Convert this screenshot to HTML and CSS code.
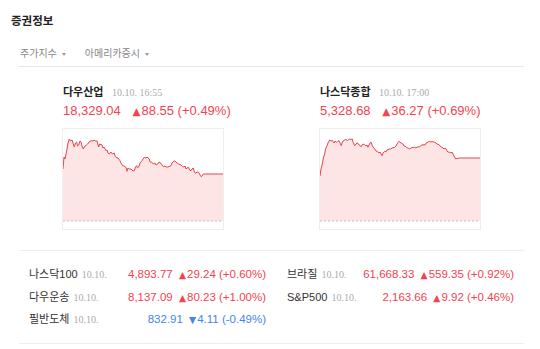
FILE: index.html
```html
<!DOCTYPE html>
<html lang="ko">
<head>
    <meta charset="UTF-8">
    <title>증권정보</title>
    <link rel="stylesheet" href="styles.css">
</head>
<body>
    <div class="title">증권정보</div>

    <div class="tabs">
        <span class="tab">주가지수</span>
        <span class="tab">아메리카증시</span>
    </div>

    <div class="indices">
        <div class="index">
            <div class="index-head">
                <span class="index-name">다우산업</span>
                <span class="date">10.10. 16:55</span>
            </div>
            <div class="index-value up">
                <span>18,329.04</span>
                <span class="change"><i class="arrow">▲</i>88.55 (+0.49%)</span>
            </div>
            <div class="chart">
                <svg viewBox="0 0 160 100" width="160" height="100">
                    <polygon class="area" points="0,92 0,40 1,28 2,30 3.7,22 5,14 6.3,10 7.5,12 9,11 10,14 11.3,18 12.5,14 13.7,13 14.5,17 15.7,16 17,12 18,13 19,17 20.3,20 22,17 23.5,16 24.7,15 26,13 28,11.7 30,12 31,11 33,12.3 34,11.8 35.7,18 36.5,15 38,15.5 39,16 40,19 41,18 43,21.7 44,21 45,24 46.3,25 48,23 49.5,25 51.3,24 52,27 53,28.3 55,29 57,31.7 58,34 59.7,36.7 61,37 63,38.3 64,42.3 65,39 66.3,40 68,40 70,42 71.3,41.7 72.5,38 73.7,36.7 74.5,39 75.7,38 77,34 79,31.7 80,30 81.3,28.3 83,29 84,28 86.3,30 87,33 88.5,33 90.3,35 92,34 93,36 94.7,35 96,33 98,34.3 99,36 100.3,37.7 102,37 103,38 104.7,38 106,37.5 108,36.7 109,34 110,33 111.3,31.7 113,33 114,34 115.7,35 117,35.5 118,36 119.7,37.7 121,38 122,37 123,40 124,39 125.7,38.3 126.5,41 128,41.7 129,40 130.3,39 131,42 132.3,44.3 133,44 134,43 135.7,43.3 136.5,45 138,47.7 139,47 140.3,45 142,45 160,45 160,92"/>
                    <polyline class="line" points="0,40 1,28 2,30 3.7,22 5,14 6.3,10 7.5,12 9,11 10,14 11.3,18 12.5,14 13.7,13 14.5,17 15.7,16 17,12 18,13 19,17 20.3,20 22,17 23.5,16 24.7,15 26,13 28,11.7 30,12 31,11 33,12.3 34,11.8 35.7,18 36.5,15 38,15.5 39,16 40,19 41,18 43,21.7 44,21 45,24 46.3,25 48,23 49.5,25 51.3,24 52,27 53,28.3 55,29 57,31.7 58,34 59.7,36.7 61,37 63,38.3 64,42.3 65,39 66.3,40 68,40 70,42 71.3,41.7 72.5,38 73.7,36.7 74.5,39 75.7,38 77,34 79,31.7 80,30 81.3,28.3 83,29 84,28 86.3,30 87,33 88.5,33 90.3,35 92,34 93,36 94.7,35 96,33 98,34.3 99,36 100.3,37.7 102,37 103,38 104.7,38 106,37.5 108,36.7 109,34 110,33 111.3,31.7 113,33 114,34 115.7,35 117,35.5 118,36 119.7,37.7 121,38 122,37 123,40 124,39 125.7,38.3 126.5,41 128,41.7 129,40 130.3,39 131,42 132.3,44.3 133,44 134,43 135.7,43.3 136.5,45 138,47.7 139,47 140.3,45 142,45 160,45"/>
                    <line class="base" x1="0" y1="92" x2="160" y2="92"/>
                </svg>
            </div>
        </div>

        <div class="index">
            <div class="index-head">
                <span class="index-name">나스닥종합</span>
                <span class="date">10.10. 17:00</span>
            </div>
            <div class="index-value up">
                <span>5,328.68</span>
                <span class="change"><i class="arrow">▲</i>36.27 (+0.69%)</span>
            </div>
            <div class="chart">
                <svg viewBox="0 0 160 100" width="160" height="100">
                    <polygon class="area" points="0,92 0,47 1,40 2.3,35 3.5,28 4.7,25 5.5,20 7,16.7 8,14 9.7,11 11,12 12,11.5 13,12.3 14,14 15,12 16.3,13.3 17.5,12.5 19,11.7 20,14 21.3,16.7 22,14 23,12 24.7,11 26,10.5 27.5,11.5 29.7,10 31,10.5 32.3,10 33,13 34.7,16.7 36,15 37,14 38,14.3 39,16 40,16.5 41.3,17.7 42,16 43,15 44.7,15.7 46,17 47,16 48,18.3 49,16 50,14 51.3,13.3 52,16 53,18 54.7,20 56,22 57,22 58,23.3 59,24 60,23 62,26.7 63,24 64.7,22.3 66,23 67,21 69.7,20 71,20 72,19 74.7,18.3 76,17 77,15 79,12.3 80,13 81,14 83,15 84,17 85,17 86.3,18.3 88,19 89.7,20 91,19 92,18.5 94.7,18.3 96,19 97,18 99.7,17.7 101,16.5 103,15.7 105,16 106,14 108,13 109.7,12.3 111,13 112,12.5 114.7,13.3 116,14 117,15 119,15.7 120,17 121,18 123,19 124,20 125,19 126.3,20 127,22 128,23 129.7,23.3 131,24 132,23 133,25 134,27 135.7,30 137,29.5 139.7,29 160,29 160,92"/>
                    <polyline class="line" points="0,47 1,40 2.3,35 3.5,28 4.7,25 5.5,20 7,16.7 8,14 9.7,11 11,12 12,11.5 13,12.3 14,14 15,12 16.3,13.3 17.5,12.5 19,11.7 20,14 21.3,16.7 22,14 23,12 24.7,11 26,10.5 27.5,11.5 29.7,10 31,10.5 32.3,10 33,13 34.7,16.7 36,15 37,14 38,14.3 39,16 40,16.5 41.3,17.7 42,16 43,15 44.7,15.7 46,17 47,16 48,18.3 49,16 50,14 51.3,13.3 52,16 53,18 54.7,20 56,22 57,22 58,23.3 59,24 60,23 62,26.7 63,24 64.7,22.3 66,23 67,21 69.7,20 71,20 72,19 74.7,18.3 76,17 77,15 79,12.3 80,13 81,14 83,15 84,17 85,17 86.3,18.3 88,19 89.7,20 91,19 92,18.5 94.7,18.3 96,19 97,18 99.7,17.7 101,16.5 103,15.7 105,16 106,14 108,13 109.7,12.3 111,13 112,12.5 114.7,13.3 116,14 117,15 119,15.7 120,17 121,18 123,19 124,20 125,19 126.3,20 127,22 128,23 129.7,23.3 131,24 132,23 133,25 134,27 135.7,30 137,29.5 139.7,29 160,29"/>
                    <line class="base" x1="0" y1="92" x2="160" y2="92"/>
                </svg>
            </div>
        </div>
    </div>

    <div class="quotes">
        <div class="quote">
            <span class="quote-name">나스닥100</span>
            <span class="date">10.10.</span>
            <span class="quote-value up">4,893.77 <i class="arrow">▲</i>29.24 (+0.60%)</span>
        </div>
        <div class="quote">
            <span class="quote-name">브라질</span>
            <span class="date">10.10.</span>
            <span class="quote-value up">61,668.33 <i class="arrow">▲</i>559.35 (+0.92%)</span>
        </div>
        <div class="quote">
            <span class="quote-name">다우운송</span>
            <span class="date">10.10.</span>
            <span class="quote-value up">8,137.09 <i class="arrow">▲</i>80.23 (+1.00%)</span>
        </div>
        <div class="quote">
            <span class="quote-name">S&amp;P500</span>
            <span class="date">10.10.</span>
            <span class="quote-value up">2,163.66 <i class="arrow">▲</i>9.92 (+0.46%)</span>
        </div>
        <div class="quote">
            <span class="quote-name">필반도체</span>
            <span class="date">10.10.</span>
            <span class="quote-value down">832.91 <i class="arrow">▼</i>4.11 (-0.49%)</span>
        </div>
    </div>
</body>
</html>
```

FILE: styles.css
```css
* { margin: 0; padding: 0; box-sizing: border-box; }
body {
    font-family: "Liberation Sans", "Noto Sans CJK KR", sans-serif;
    background: #fff;
    color: #333;
    width: 540px;
}

.title {
    padding: 13px 11px 0;
    font-size: 11.5px;
    font-weight: bold;
    line-height: 16px;
    color: #222;
}

.tabs {
    margin: 0 16px 0 19px;
    padding: 17px 0 4px 1px;
    border-bottom: 1px solid #e6e6e6;
    display: flex;
    gap: 19px;
    font-size: 10px;
    line-height: 16px;
    color: #888;
}

.tab::after {
    content: "";
    display: inline-block;
    margin-left: 5px;
    vertical-align: middle;
    border-top: 3px solid #999;
    border-left: 2.5px solid transparent;
    border-right: 2.5px solid transparent;
}

.indices {
    margin: 0 16px 0 19px;
    padding: 16px 0 20px;
    display: flex;
    justify-content: center;
    gap: 95px;
}

.index {
    width: 162px;
}

.index-head {
    height: 16px;
    line-height: 16px;
    padding-left: 1px;
    white-space: nowrap;
}

.index-name {
    font-size: 11px;
    font-weight: bold;
    color: #222;
}

.date {
    font-family: "Liberation Serif", serif;
    font-size: 10px;
    color: #aaa;
    margin-left: 4px;
}

.index-value {
    height: 18px;
    margin-top: 3px;
    padding-left: 1px;
    font-size: 13px;
    line-height: 18px;
    white-space: nowrap;
}

.index-value .change {
    margin-left: 8px;
}

.up { color: #f3434f; }
.down { color: #4285f4; }

.arrow {
    font-style: normal;
    font-family: "DejaVu Sans", sans-serif;
    font-size: 0.8em;
    margin-right: 1px;
}

.chart {
    margin-top: 8px;
    border: 1px solid #eee;
    width: 162px;
    height: 102px;
}

.chart svg {
    display: block;
}

.chart .area {
    fill: #fde5e5;
}

.chart .line {
    fill: none;
    stroke: #e5474c;
    stroke-width: 1;
    stroke-linejoin: round;
}

.chart .base {
    stroke: #bbb;
    stroke-width: 1;
    stroke-dasharray: 2 2;
}

.quotes {
    margin: 0 16px 0 19px;
    padding: 12px 10px;
    border-top: 1px solid #eee;
    border-bottom: 1px solid #eee;
    display: grid;
    grid-template-columns: 237px 1fr;
    column-gap: 21px;
}

.quote {
    display: flex;
    align-items: baseline;
    height: 22.5px;
    line-height: 22.5px;
    white-space: nowrap;
}

.quote-name {
    font-size: 11px;
    color: #333;
}

.quote-value {
    margin-left: auto;
    font-size: 11.5px;
}

.quote-value .arrow {
    margin-left: 3px;
}
```
